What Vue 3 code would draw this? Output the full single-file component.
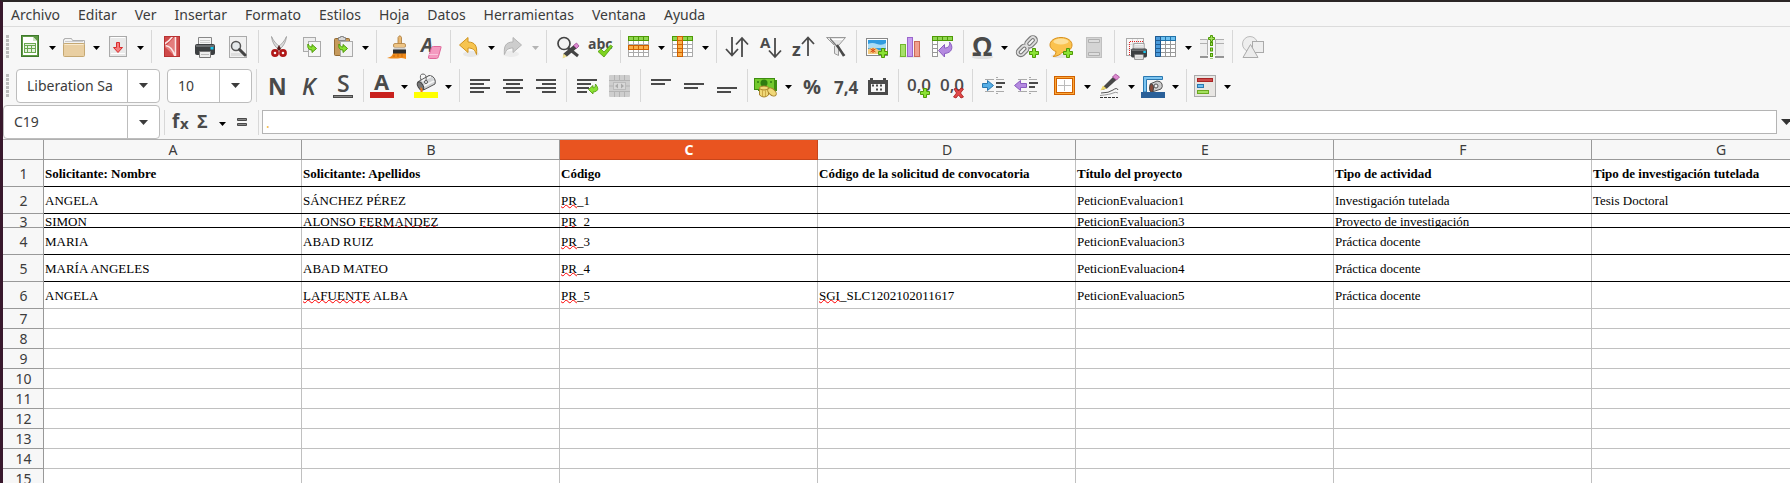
<script setup>
import { ref } from 'vue'

const menus = ['Archivo', 'Editar', 'Ver', 'Insertar', 'Formato', 'Estilos', 'Hoja', 'Datos', 'Herramientas', 'Ventana', 'Ayuda']

const plus = (x, y) => `<path d="M${x + 3.5} ${y + .5}h3v3h3v3h-3v3h-3v-3h-3v-3h3z" fill="#8ae234" stroke="#4e9a06"/>`
const lines = (list, color = '#4a4a4a') => list.map(([x, y, w]) => `<rect x="${x}" y="${y}" width="${w}" height="2" fill="${color}"/>`).join('')
const sans = 'font-family="Open Sans, Noto Sans, sans-serif" font-weight="700" fill="#4a4a4a"'
const printer = (x, y, s) => `<g transform="translate(${x} ${y}) scale(${s})"><path d="M3.500 9V.5h13V9" fill="#f4f4f4" stroke="#888"/><path d="M5 3.500h10M5 5.500h10" stroke="#ccc"/><rect y="7" width="20" height="11" rx="2" fill="#3c3f41"/><rect x="1" y="8" width="18" height="2" fill="#6a6d6f"/><rect x="15.500" y="10" width="3" height="2.500" fill="#18c8f0"/><path d="M4.500 14.500h11v6h-11z" fill="#eee" stroke="#777"/><path d="M6 17.500h8" stroke="#bbb"/></g>`
const grid = (x, y, cols, rows, w, h) => {
  let out = ''
  for (let r = 0; r < rows; r++) for (let c = 0; c < cols; c++) out += `<rect x="${x + c * w + .5}" y="${y + r * h + .5}" width="${w}" height="${h}"/>`
  return out
}

const icons = {
  new: '<rect x="3.500" y=".5" width="17" height="21" fill="#5f9a45" stroke="#3f7a2c"/><path d="M5 2h10l4 4v14H5z" fill="#fff"/><path d="M15 2v4h4z" fill="#cfe4c4"/><rect x="6" y="8" width="12" height="10" fill="#6aa84f"/><g fill="#e5f2de"><rect x="7" y="9" width="10" height="1"/><rect x="7" y="11" width="2" height="2"/><rect x="10" y="11" width="3" height="2"/><rect x="14" y="11" width="3" height="2"/><rect x="7" y="14" width="2" height="3"/><rect x="10" y="14" width="3" height="3"/><rect x="14" y="14" width="3" height="3"/></g>',
  open: '<path d="M1.500 9V4.500h1v-1h7l1 2h12V9z" fill="#f3f3f3" stroke="#b0b0b0"/><path d="M3 6.500h18" stroke="#ccc"/><rect x="1.500" y="8.500" width="21" height="13" rx="1" fill="#e9cfa2" stroke="#c5a872"/><path d="M2.500 9.500h19" stroke="#f8ead0"/>',
  save: '<rect x="3.500" y="1.500" width="17" height="20" fill="#e9e9e9" stroke="#aaa"/><path d="M5 2.500h14M5 18.500h14" stroke="#fff"/><path d="M10.500 7.500h3v5h3l-4.500 5-4.500-5h3z" fill="#f47c7c" stroke="#d82c2c"/>',
  pdf: '<rect x="4" y="1" width="16" height="21" fill="#cf4a4a"/><path d="M15 1.500L5 12l10 9.500V1.500z" fill="#e47c7c"/><path d="M4.500 9q5-3 8-7.500M5.500 10.500q7 1 9.500 11M15.500 2v20" stroke="#fbe6e6" stroke-width="1.500" fill="none"/><rect x="4.500" y="1.500" width="15" height="20" fill="none" stroke="#b83232"/>',
  print: printer(2, 2, 1),
  preview: '<rect x="3.500" y="1.500" width="17" height="21" fill="#f0f0f0" stroke="#aaa"/><path d="M5 19.500h14" stroke="#ddd" stroke-width="3"/><circle cx="10" cy="11" r="4.500" fill="#e4e8ea" stroke="#555" stroke-width="1.500"/><path d="M13.500 14.500L19 20" stroke="#444" stroke-width="3" stroke-linecap="round"/>',
  cut: '<path d="M4.500 1.500c.5 5 3 10 7 13l2-2c-3-2.500-7-6-9-11zM19.500 1.500c-.5 5-3 10-7 13l-2-2c3-2.500 7-6 9-11z" fill="#ddd" stroke="#999" stroke-width=".8"/><path d="M12 10l2 4-2 2-2-2z" fill="#5a1a1a"/><g fill="none" stroke="#b01818" stroke-width="2.600"><circle cx="8" cy="18" r="2.600"/><circle cx="16" cy="18" r="2.600"/></g>',
  copy: '<rect x="3.500" y="2.500" width="12" height="14" fill="#eee" stroke="#aaa"/><rect x="8.500" y="6.500" width="12" height="15" fill="#f6f6f6" stroke="#aaa"/><path d="M8 9c-1 4 1 6 4 6v2.500l4.500-4-4.500-4V12c-2 0-3-1-4-3z" fill="#8ae234" stroke="#4e9a06"/>',
  paste: '<rect x="3.500" y="3.500" width="15" height="17" rx="1" fill="#c69a5c" stroke="#916a34"/><path d="M7.500 5.500v-3h2v-1h3v1h2v3z" fill="#d8d8d8" stroke="#888"/><rect x="9.500" y="6.500" width="12" height="15" fill="#f2f2f2" stroke="#aaa"/><path d="M8 9c-1 4 1 6 4 6v2.500l4.500-4-4.500-4V12c-2 0-3-1-4-3z" fill="#8ae234" stroke="#4e9a06"/>',
  brush: '<path d="M13 2.500q2-3.500 3.500 0v7.500h-3.500z" fill="#e9b872" stroke="#a87838" stroke-width=".8"/><rect x="8.500" y="8.500" width="12" height="4" rx="1.500" fill="#edc485" stroke="#b08040" stroke-width=".8"/><path d="M8.500 12.500h12v2.500h-12z" fill="#d5d5d5"/><path d="M8 14.500h13v4.500H8z" fill="#2c2c2c"/><path d="M8 18.500h13V24q-3-1-5-1-6 1-14 0 5-1 6-4.500z" fill="#ee8a1c"/><path d="M9 20v2m4-3v3m4-3v3" stroke="#c96a08"/>',
  erase: `<text x="3" y="17" font-size="19" font-style="italic" ${sans}>A</text><path d="M13.500 12.500q.5-1 2-1h7q1 0 .5 1l-2.500 9q-.5 2-2 2h-7q-1.500 0-1-1.500z" fill="#f49ac0" stroke="#e0669a"/><path d="M11 19.500h9" stroke="#fbc6dd"/>`,
  undo: '<ellipse cx="14" cy="19" rx="8" ry="3" fill="#e8e8e8"/><path d="M2.500 10L11 2.500V7c7 0 9.500 4 8.500 12.500-1.500-5-4-6.500-8.500-6.500v4.500z" fill="#f6c450" stroke="#cf9420"/>',
  redo: '<ellipse cx="10" cy="19" rx="8" ry="3" fill="#ececec"/><path d="M20.500 10L12 2.500V7C5 7 2.500 11 3.500 19.500 5 14.500 7.500 13 12 13v4.500z" fill="#cdcdcd" stroke="#b4b4b4"/>',
  find: '<circle cx="9" cy="8.500" r="6" fill="#f2f2f2" stroke="#444" stroke-width="1.700"/><path d="M13 13l10 8" stroke="#444" stroke-width="3"/><path d="M8.500 18.500L19 10l3 3-10 8.500-4 1z" fill="#444"/><path d="M8.500 18.500L7.500 23.500l4.500-2z" fill="#eedf90"/><path d="M18.500 10.500l3-2.500 2.500 3-2.500 2.500z" fill="#dc8ad0" stroke="#a04a94" stroke-width=".8"/>',
  spell: `<text x="0" y="14" font-size="14" ${sans}>abc</text><path d="M10 16.500l3-2.500 3 3 6.500-7 2 1.500-8.500 10.500z" fill="#7ed321" stroke="#4e9a06" stroke-width=".8"/>`,
  row: `<g fill="#fff" stroke="#aaa">${grid(1, 1, 4, 5, 5, 4)}</g><g fill="#8fd650" stroke="#4e9a06">${grid(1, 1, 4, 1, 5, 4)}</g><g fill="#fbb04a" stroke="#d06000">${grid(1, 10, 4, 1, 5, 4)}</g>`,
  col: `<g fill="#fff" stroke="#aaa">${grid(1, 1, 4, 5, 5, 4)}</g><g fill="#8fd650" stroke="#4e9a06">${grid(1, 1, 4, 1, 5, 4)}</g><g fill="#fbb04a" stroke="#d06000">${grid(6, 1, 1, 5, 5, 4)}</g>`,
  sort: '<path d="M7 2v18M1 14l6 6.500 6-6.500M17 22V4M11 9.500l6-6.500 6 6.500" fill="none" stroke="#4a4a4a" stroke-width="1.800"/>',
  az: `<text x="2" y="13" font-size="15" ${sans}>A</text><path d="M17 3v18M11 15.500l6 6.500 6-6.500" fill="none" stroke="#4a4a4a" stroke-width="1.800"/>`,
  za: `<text x="1" y="21" font-size="18" ${sans}>z</text><path d="M17 21V3M11 9l6-6.500L23 9" fill="none" stroke="#4a4a4a" stroke-width="1.800"/>`,
  filter: '<path d="M2.500 2.500h19l-7 8v10l-4-2v-8z" fill="#e6e6e6" stroke="#999"/><path d="M5 4.500h14M10.500 10.500h4" stroke="#fff"/><path d="M6 3.500l15 17" stroke="#777" stroke-width="1.200"/><path d="M13 10l7 11" stroke="#4a4a4a" stroke-width="2.400"/>',
  image: `<rect x="1.500" y="3.500" width="21" height="17" fill="#fff" stroke="#888"/><rect x="3" y="5" width="18" height="14" fill="#2f9be0"/><path d="M3 9q4-2 9 0t9-1v5H3z" fill="#a9dcf5"/><path d="M3 14q6-3 9 0t9 0v5H3z" fill="#f4c97c"/><path d="M8 13v5M5.500 14l5 3m0-3l-5 3" stroke="#d84a10"/>${plus(13, 13)}`,
  chart: '<rect x="1" y="20.500" width="22" height="2" rx="1" fill="#ddd"/><rect x="2.500" y="9.500" width="5" height="12" fill="#a6e06a" stroke="#72b82c"/><rect x="9.500" y="2.500" width="5" height="19" fill="#c69cf0" stroke="#9a66cc"/><rect x="16.500" y="6.500" width="5" height="15" fill="#f0a090" stroke="#cc6a58"/>',
  pivot: `<g fill="#fff" stroke="#999">${grid(1, 5, 1, 4, 5, 4)}</g><g fill="#8fd650" stroke="#4e9a06">${grid(1, 1, 4, 1, 5, 4)}</g><path d="M7.500 15.500l6-6v3.500c4 0 5.500-2 5-6 4.500 5 2.500 11-5 11.500V22z" fill="#b48ae0" stroke="#8a5cc0"/>`,
  omega: `<ellipse cx="12.500" cy="22" rx="11" ry="2" fill="#e0e0e0"/><text x="2" y="21" font-size="26" ${sans}>Ω</text>`,
  link: `<g fill="none"><g stroke="#777" stroke-width="4"><rect x="1" y="-3" width="11" height="6" rx="3" transform="translate(2 20) rotate(-45)"/><rect x="1" y="-3" width="11" height="6" rx="3" transform="translate(10.500 11.500) rotate(-45)"/></g><g stroke="#ddd" stroke-width="1.800"><rect x="1" y="-3" width="11" height="6" rx="3" transform="translate(2 20) rotate(-45)"/><rect x="1" y="-3" width="11" height="6" rx="3" transform="translate(10.500 11.500) rotate(-45)"/></g></g>${plus(13, 13)}`,
  comment: `<ellipse cx="11" cy="21" rx="9" ry="2" fill="#e4e4e4"/><path d="M12 2.500c7 0 11 3.500 11 7.500s-4 7.500-10 7.500c-1.500 2-5 4-9 4 2-1 3-3 3-5-4-1.500-6-4-6-6.500 0-4 4-7.500 11-7.500z" fill="#fbc24e" stroke="#d8901c"/><ellipse cx="12" cy="6.500" rx="7.500" ry="3" fill="#fde09a"/>${plus(14, 13)}`,
  header: '<rect x="4.500" y="2.500" width="15" height="20" fill="#d4d4d4" stroke="#c0c0c0"/><path d="M6.500 4.500h11v3h-11zM6.500 17.500h11v3h-11z" fill="#ddd" stroke="#b0b0b0"/>',
  area: `<rect x="3.500" y="3.500" width="17" height="17" fill="#f8f8f8" stroke="#aaa"/><path d="M4 9.500h16M4 14.500h16M9.500 4v16M14.500 4v16" stroke="#ddd"/><path d="M6.500 20V6.500H20" fill="none" stroke="#e02020" stroke-dasharray="1 1"/>${printer(8, 8, .8)}`,
  freeze: `<g fill="#fff" stroke="#999">${grid(1, 1, 4, 5, 5, 4)}</g><g fill="#6cc0f0" stroke="#2272a8">${grid(1, 1, 4, 1, 5, 4)}</g><path d="M1.500 1.500h5v20h-5z" fill="#4a9ada" stroke="#205a90"/><path d="M1 5.500h5M1 9.500h5M1 13.500h5M1 17.500h5" stroke="#205a90"/>`,
  split: '<g fill="#eee"><path d="M0 4h7v18H0zM16 4h8v18h-8z"/></g><path d="M0 4.500h7.500v4H0M24 4.500h-8.500v4H24M7.500 8v12M15.500 8v12" fill="none" stroke="#b0b0b0"/><path d="M0 22h8M15 22h9" stroke="#777" stroke-width="1.500"/><path d="M11.500 7v17" stroke="#4e9a06" stroke-width="3" stroke-dasharray="4 1.500"/><path d="M11.500 8v15" stroke="#a4e060" stroke-dasharray="2 3.500"/><path d="M10.500.5h2v2h2v2h-2v2h-2v-2h-2v-2h2z" fill="#a4e060" stroke="#4e9a06"/>',
  shapes: '<circle cx="9" cy="9" r="7.500" fill="#eee" stroke="#bbb"/><rect x="11.500" y="6.500" width="11" height="11" fill="#eee" stroke="#aaa"/><path d="M9.500 9.500l7.500 13H2z" fill="#ececec" stroke="#aaa"/>',
  bold: `<text x="3" y="21" font-size="23" ${sans}>N</text>`,
  italic: '<text x="4" y="21" font-size="23" font-style="italic" font-family="Open Sans, sans-serif" font-weight="600" fill="#4a4a4a">K</text>',
  underline: '<text x="6" y="18" font-size="23" font-family="Open Sans, sans-serif" font-weight="600" fill="#4a4a4a">S</text><rect x="2.500" y="21.500" width="19" height="2" fill="#888" stroke="#4a4a4a"/>',
  color: `<text x="4" y="16" font-size="22" ${sans}>A</text><rect y="18" width="24" height="6" fill="#c9211e"/>`,
  fill: '<path d="M3.500 8L15 1.500q4 0 5.500 3t.5 5.500L9.500 16z" fill="#d2d4d6" stroke="#555"/><path d="M8 7l9-4.500M10 12l10-5" stroke="#f6f6f6" stroke-width="1.500"/><ellipse cx="6.500" cy="12" rx="2.500" ry="4.500" transform="rotate(-30 6.500 12)" fill="#777" stroke="#444"/><path d="M7 6q-2-6 2-6t3 7" fill="none" stroke="#666"/><circle cx="12" cy="8" r="1.500" fill="#fff" stroke="#555"/><path d="M6.500 13q3 2 2 5h-2z" fill="#f07818"/><rect y="18" width="24" height="6" fill="#ff0"/>',
  left: lines([[2, 5, 20], [2, 9, 14], [2, 13, 20], [2, 17, 14]]),
  center: lines([[2, 5, 20], [5, 9, 14], [2, 13, 20], [5, 17, 14]]),
  right: lines([[2, 5, 20], [8, 9, 14], [2, 13, 20], [8, 17, 14]]),
  wrap: lines([[2, 5, 20], [2, 9, 14], [2, 13, 12], [2, 17, 10]]) + '<path d="M13.500 15.500l4.500-4v2.500q3 0 2.500-4 4 5 1 7-1.500 1-3.500 1v2z" fill="#8ae234" stroke="#4e9a06" stroke-width=".8"/>',
  merge: '<rect x="1" y="1" width="21" height="22" rx="1" fill="#cecece"/><path d="M1 6.500h21M1 17.500h21M6.500 1v5M11.500 1v5M16.500 1v5M6.500 18v5M11.500 18v5M16.500 18v5M1 12h4M18 12h4" stroke="#b4b4b4"/><rect x="5.500" y="8.500" width="12" height="7" fill="#d8d8d8" stroke="#bbb"/><path d="M7 12l3-2.500v5zM16 12l-3-2.500v5z" fill="#aaa"/>',
  top: lines([[2, 5, 20], [2, 9, 14]]),
  middle: lines([[2, 9, 20], [2, 13, 14]]),
  bottom: lines([[2, 13, 20], [2, 17, 14]]),
  currency: '<path d="M4 6h19v11H4z" fill="#3e8e10"/><rect x=".5" y="4.500" width="20" height="11" fill="#73c92d" stroke="#3e8e10"/><circle cx="10" cy="9" r="3.500" fill="#2f7d10"/><circle cx="4" cy="8" r="1" fill="#2f7d10"/><circle cx="17" cy="8" r="1" fill="#2f7d10"/><g fill="#f0d878" stroke="#a8842c"><path d="M5.500 14v7q4.500 4 9 0v-7z"/><ellipse cx="10" cy="14" rx="4.500" ry="2"/><path d="M8.500 16v6M11.500 16v6" stroke="#cda948"/><ellipse cx="18" cy="18" rx="3" ry="5" transform="rotate(-50 18 18)"/></g>',
  percent: `<text x="3" y="20" font-size="20" ${sans}>%</text>`,
  number: `<text x="1" y="20" font-size="17" ${sans}>7,4</text>`,
  date: '<path d="M2 6h2V4h3v2h10V4h3v2h2v15H2z" fill="#4a4a4a"/><rect x="5" y="10" width="14" height="8" fill="#f7f7f7"/><path d="M6 11.500h2m2 0h2m2 0h2M10 15.500h2m2 0h2" stroke="#4a4a4a" stroke-width="2"/>',
  addDec: `<text x="0" y="17" font-size="17" font-family="Open Sans, sans-serif" font-weight="600" fill="#4a4a4a">0,0</text>${plus(13, 14)}`,
  delDec: '<text x="0" y="17" font-size="17" font-family="Open Sans, sans-serif" font-weight="600" fill="#4a4a4a">0,0</text><path d="M14 15l2-1 2.500 3 2.500-3 2.500 1-3 4 3 4-2.500 1-2.500-3-2.500 3-2.500-1 3-4z" fill="#e04848" stroke="#a81818" stroke-width=".8"/>',
  indent: lines([[15, 8, 9], [15, 12, 6]]) + '<path d="M4 5.500h9M15 5.500h8M4 17.500h9M15 17.500h8M15 3.500h2M15 19.500h2" stroke="#aaa"/><path d="M1.500 9.500h5v-3l6 5-6 5v-3h-5z" fill="#56aee6" stroke="#2a78b0"/>',
  outdent: lines([[15, 8, 9], [15, 12, 6]]) + '<path d="M4 5.500h9M15 5.500h8M4 17.500h9M15 17.500h8M15 3.500h2M15 19.500h2" stroke="#aaa"/><path d="M12.500 9.500h-6v-3l-6 5 6 5v-3h6z" fill="#b48ae0" stroke="#8a5cc0"/>',
  border: '<rect x="2.500" y="3.500" width="18" height="16" fill="#fff" stroke="#d06000" stroke-width="3"/><rect x="2.500" y="3.500" width="18" height="16" fill="none" stroke="#fca93a"/><path d="M11.500 6v11M5 11.500h13" stroke="#bbb"/>',
  lineStyle: '<path d="M7 12L17 2l3.500 3L10 14.500 5 16z" fill="#484848"/><path d="M6 11.500L3.500 16.500l6-2z" fill="#ecd76a"/><path d="M15.500 3l3-3 4 3-3 3z" fill="#dc8ad0" stroke="#a04a94" stroke-width=".8"/><path d="M4 19q8 0 12-3t5 0" fill="none" stroke="#555"/><path d="M3 21.500q10-1 13-2.500t5 0" fill="none" stroke="#999"/><path d="M3 23.500h18" stroke="#333" stroke-dasharray="3 1"/>',
  borderColor: '<path d="M2.500 18V2.500h19v3h-16V18z" fill="#7cc4f0" stroke="#2a78b0"/><path d="M9 10l7-3q4 0 5 3t-1 5l-9 3z" fill="#ccc" stroke="#555"/><ellipse cx="10.500" cy="14" rx="2" ry="4" fill="#8a4a38" stroke="#444"/><circle cx="15" cy="12" r="2" fill="#eee" stroke="#555"/><rect y="18" width="24" height="6" fill="#2a6099"/>',
  conditional: '<rect x="1.500" y="1.500" width="21" height="21" fill="#e8e6e3" stroke="#aaa"/><rect x="4.500" y="4.500" width="15" height="3" fill="#cc4a4a" stroke="#a82424"/><rect x="4.500" y="10.500" width="6" height="3" fill="#6cbef0" stroke="#2a78b0"/><rect x="4.500" y="16.500" width="11" height="3" fill="#a4e060" stroke="#6aa820"/>'
}

const b = (icon, label) => ({ icon, label })
const d = (icon, label, disabled = false) => ({ icon, label, split: true, disabled })

const standardGroups = [
  [d('new', 'Nuevo'), d('open', 'Abrir'), d('save', 'Guardar')],
  [b('pdf', 'Exportar a PDF'), b('print', 'Imprimir'), b('preview', 'Previsualización')],
  [b('cut', 'Cortar'), b('copy', 'Copiar'), d('paste', 'Pegar')],
  [b('brush', 'Clonar formato'), b('erase', 'Limpiar formato')],
  [d('undo', 'Deshacer'), d('redo', 'Rehacer', true)],
  [b('find', 'Buscar y reemplazar'), b('spell', 'Ortografía')],
  [d('row', 'Fila'), d('col', 'Columna')],
  [b('sort', 'Ordenar'), b('az', 'Orden ascendente'), b('za', 'Orden descendente'), b('filter', 'Filtro automático')],
  [b('image', 'Insertar imagen'), b('chart', 'Insertar gráfico'), b('pivot', 'Tabla dinámica')],
  [d('omega', 'Carácter especial'), b('link', 'Hiperenlace'), b('comment', 'Comentario'), b('header', 'Cabeceras y pies')],
  [b('area', 'Área de impresión'), d('freeze', 'Inmovilizar'), b('split', 'Dividir ventana')],
  [b('shapes', 'Formas')]
]

const formatGroups = [
  [b('bold', 'Negrita'), b('italic', 'Cursiva'), b('underline', 'Subrayado')],
  [d('color', 'Color de letra'), d('fill', 'Color de fondo')],
  [b('left', 'Izquierda'), b('center', 'Centro'), b('right', 'Derecha')],
  [b('wrap', 'Ajustar texto'), b('merge', 'Combinar celdas')],
  [b('top', 'Arriba'), b('middle', 'Medio'), b('bottom', 'Abajo')],
  [d('currency', 'Moneda'), b('percent', 'Porcentaje'), b('number', 'Número'), b('date', 'Fecha')],
  [b('addDec', 'Añadir decimal'), b('delDec', 'Eliminar decimal')],
  [b('indent', 'Aumentar sangría'), b('outdent', 'Reducir sangría')],
  [d('border', 'Bordes'), d('lineStyle', 'Estilo de borde'), d('borderColor', 'Color de borde')],
  [d('conditional', 'Formato condicional')]
]

const toolbars = [
  { name: 'Estándar', groups: standardGroups },
  { name: 'Formato', groups: formatGroups, fonts: true }
]

const fontName = ref('Liberation Sa')
const fontSize = ref('10')
const cellRef = ref('C19')
const formula = ref('.')

const columns = ['A', 'B', 'C', 'D', 'E', 'F', 'G']
const activeColumn = 'C'

// Words between asterisks are marked by the spell checker.
const data = [
  ['Solicitante: Nombre', 'Solicitante: Apellidos', 'Código', 'Código de la solicitud de convocatoria', 'Título del proyecto', 'Tipo de actividad', 'Tipo de investigación tutelada'],
  ['ANGELA', 'SÁNCHEZ PÉREZ', '*PR*_1', '', 'PeticionEvaluacion1', 'Investigación tutelada', 'Tesis Doctoral'],
  ['SIMON', 'ALONSO *FERMANDEZ*', '*PR*_2', '', 'PeticionEvaluacion3', 'Proyecto de investigación', ''],
  ['MARIA', 'ABAD RUIZ', '*PR*_3', '', 'PeticionEvaluacion3', 'Práctica docente', ''],
  ['MARÍA ANGELES', 'ABAD MATEO', '*PR*_4', '', 'PeticionEvaluacion4', 'Práctica docente', ''],
  ['ANGELA', '*LAFUENTE* ALBA', '*PR*_5', '*SGI*_SLC1202102011617', 'PeticionEvaluacion5', 'Práctica docente', '']
]

const rows = Array.from({ length: 15 }, (_, i) => ({
  number: i + 1,
  cells: (data[i] || columns.map(() => '')).map(text => text.split('*')),
  kind: [i === 2 ? 'short' : i < 6 ? 'tall' : 'plain', i < 5 ? 'ruled' : '', i === 0 ? 'heading' : '']
}))
</script>

<template>
  <div class="window">
    <nav class="menubar" aria-label="Menú">
      <button v-for="menu in menus" :key="menu" type="button">{{ menu }}</button>
    </nav>

    <div v-for="bar in toolbars" :key="bar.name" class="toolbar" role="toolbar" :aria-label="bar.name">
      <span class="grip"></span>
      <template v-if="bar.fonts">
        <div class="combo font-name">
          <input v-model="fontName" type="text" aria-label="Nombre de letra" />
          <button type="button" aria-label="Lista de letras"><svg width="9" height="5"><path d="M0 0h9L4.500 5z" fill="#3c3c3c" /></svg></button>
        </div>
        <div class="combo font-size">
          <input v-model="fontSize" type="text" aria-label="Tamaño de letra" />
          <button type="button" aria-label="Lista de tamaños"><svg width="9" height="5"><path d="M0 0h9L4.500 5z" fill="#3c3c3c" /></svg></button>
        </div>
        <span class="sep"></span>
      </template>
      <template v-for="(group, gi) in bar.groups" :key="gi">
        <span v-if="gi" class="sep"></span>
        <div v-for="tool in group" :key="tool.icon" class="tool" :class="{ split: tool.split }">
          <button class="main" type="button" :aria-label="tool.label" :disabled="tool.disabled">
            <svg width="24" height="24" viewBox="0 0 24 24" v-html="icons[tool.icon]"></svg>
          </button>
          <button v-if="tool.split" class="drop" type="button" :aria-label="tool.label + ': opciones'" :disabled="tool.disabled">
            <svg width="16" height="33" viewBox="0 0 16 33"><path d="M5 16h7l-3.500 4z" fill="currentColor" /></svg>
          </button>
        </div>
      </template>
    </div>

    <div class="formulabar">
      <div class="combo name-box">
        <input v-model="cellRef" type="text" aria-label="Cuadro de nombre" />
        <button type="button" aria-label="Lista de nombres"><svg width="9" height="5"><path d="M0 0h9L4.500 5z" fill="#3c3c3c" /></svg></button>
      </div>
      <span class="sep-short"></span>
      <div class="functions">
        <button type="button" aria-label="Asistente de funciones">
          <svg width="20" height="24" viewBox="0 0 20 24"><g font-family="Open Sans, sans-serif" font-weight="700" fill="#4a4a4a"><text x="0" y="18" font-size="19">f</text><text x="8" y="19" font-size="15">x</text></g></svg>
        </button>
        <button type="button" aria-label="Suma">
          <svg width="16" height="24" viewBox="0 0 16 24"><text x="3" y="18" font-size="18" font-family="Open Sans, sans-serif" font-weight="700" fill="#4a4a4a">Σ</text></svg>
        </button>
        <button type="button" aria-label="Suma: opciones">
          <svg width="16" height="24" viewBox="0 0 16 24"><path d="M7 12h7l-3.500 4z" /></svg>
        </button>
        <button type="button" aria-label="Fórmula">
          <svg width="24" height="24" viewBox="0 0 24 24"><path d="M7.500 8.500h9v2h-9zM7.500 13.500h9v2h-9z" fill="#888" stroke="#4a4a4a" /></svg>
        </button>
      </div>
      <span class="sep-short"></span>
      <input v-model="formula" class="formula" type="text" aria-label="Línea de entrada" />
      <button class="expand" type="button" aria-label="Expandir barra de fórmulas"><svg width="11" height="6"><path d="M0 0h11L5.500 6z" fill="#333" /></svg></button>
    </div>

    <main class="sheet">
      <table>
        <colgroup>
          <col class="number-col" />
          <col v-for="column in columns" :key="column" class="data-col" />
        </colgroup>
        <thead>
          <tr>
            <td class="corner"></td>
            <th v-for="column in columns" :key="column" scope="col" :class="{ active: column === activeColumn }">{{ column }}</th>
          </tr>
        </thead>
        <tbody>
          <tr v-for="row in rows" :key="row.number" :class="row.kind">
            <th scope="row"><div class="cell">{{ row.number }}</div></th>
            <td v-for="(parts, ci) in row.cells" :key="ci">
              <div class="cell"><template v-for="(part, pi) in parts" :key="pi"><span v-if="pi % 2" class="misspelt">{{ part }}</span><template v-else>{{ part }}</template></template></div>
            </td>
          </tr>
        </tbody>
      </table>
    </main>
  </div>
</template>

<style>
body {
  margin: 0;
}
</style>

<style scoped>
.window {
  box-sizing: border-box;
  display: flex;
  flex-direction: column;
  height: 100vh;
  overflow: hidden;
  border-top: 2px solid #2b2626;
  border-left: 3px solid #38182c;
  background: #f7f7f7;
  color: #3c3c3c;
  font: 14px/20px "Noto Sans", sans-serif;
}

button,
input {
  margin: 0;
  padding: 0;
  border: 0;
  background: none;
  color: inherit;
  font: inherit;
}

svg {
  display: block;
  overflow: visible;
}

.menubar {
  display: flex;
  align-items: flex-end;
  height: 24px;
  padding-left: 8px;
  gap: 18px;
  border-bottom: 1px solid #dcdcdc;
}

.menubar button {
  height: 22px;
}

.toolbar {
  display: flex;
  align-items: center;
  height: 39px;
  padding-left: 3px;
}

.grip {
  flex: none;
  width: 3px;
  height: 23px;
  margin-right: 7px;
  background: repeating-linear-gradient(#bcbcbc 0 3px, transparent 3px 4px);
}

.sep {
  flex: none;
  width: 1px;
  height: 33px;
  margin: 0 4px 0 3px;
  background: #d8d8d8;
}

.tool {
  display: flex;
  flex: none;
  height: 33px;
}

.main {
  width: 33px;
  padding-left: 4px;
}

.split .main {
  width: 28px;
  padding-left: 2px;
}

.drop {
  width: 16px;
  color: #000;
}

.drop:disabled {
  color: #b4b4b4;
}

.combo {
  box-sizing: border-box;
  display: flex;
  flex: none;
  height: 34px;
  border: 1px solid #bdbdbd;
  border-radius: 4px;
  background: #fff;
}

.combo input {
  flex: 1;
  min-width: 0;
  padding-left: 10px;
}

.combo button {
  display: flex;
  align-items: center;
  justify-content: center;
  width: 32px;
  border-left: 1px solid #bdbdbd;
}

.font-name {
  width: 144px;
  margin-right: 7px;
}

.font-size {
  width: 85px;
  margin-right: 1px;
}

.formulabar {
  display: flex;
  align-items: center;
  height: 34px;
}

.name-box {
  width: 157px;
}

.sep-short {
  flex: none;
  width: 1px;
  height: 25px;
  margin: 0 3px 0 4px;
  background: #d8d8d8;
}

.functions {
  display: flex;
  flex: none;
  gap: 2px;
  padding-left: 4px;
}

.formula {
  box-sizing: border-box;
  flex: 1;
  min-width: 0;
  height: 24px;
  padding-left: 3px;
  border: 1px solid #b4b4b4;
  background: #fff;
  color: #f0b848;
}

.expand {
  flex: none;
  width: 13px;
  padding-left: 4px;
}

.sheet {
  flex: 1;
  min-height: 0;
  overflow: hidden;
  border-top: 1px solid #b0b0b0;
  background: #fff;
}

table {
  width: max-content;
  table-layout: fixed;
  border-spacing: 0;
}

.number-col {
  width: 41px;
}

.data-col {
  width: 258px;
}

th,
td {
  box-sizing: border-box;
  padding: 0;
  border-bottom: 1px solid #c0c0c0;
  box-shadow: inset -1px 0 #c0c0c0;
}

th,
.corner {
  border-color: #999;
  background: #f7f7f7;
  box-shadow: inset -1px 0 #999;
  font-weight: 400;
}

thead th,
.corner {
  height: 20px;
  line-height: 19px;
}

thead th.active {
  border-color: #c8451a;
  background: #e95420;
  box-shadow: inset -1px 0 #c8451a;
  color: #fff;
  font-weight: 700;
}

.cell {
  height: 19px;
  overflow: hidden;
  line-height: 20px;
  white-space: nowrap;
}

.tall .cell {
  height: 26px;
  line-height: 28px;
}

.short .cell {
  height: 13px;
  line-height: 15px;
}

tbody td .cell {
  padding-left: 1px;
  color: #000;
  font-family: "Liberation Serif", serif;
  font-size: 13px;
}

.ruled td {
  border-bottom-color: #000;
}

.heading td .cell {
  font-weight: 700;
}

.misspelt {
  text-decoration: underline wavy #f00 1px;
  text-decoration-skip-ink: none;
  text-underline-offset: -1px;
}
</style>
